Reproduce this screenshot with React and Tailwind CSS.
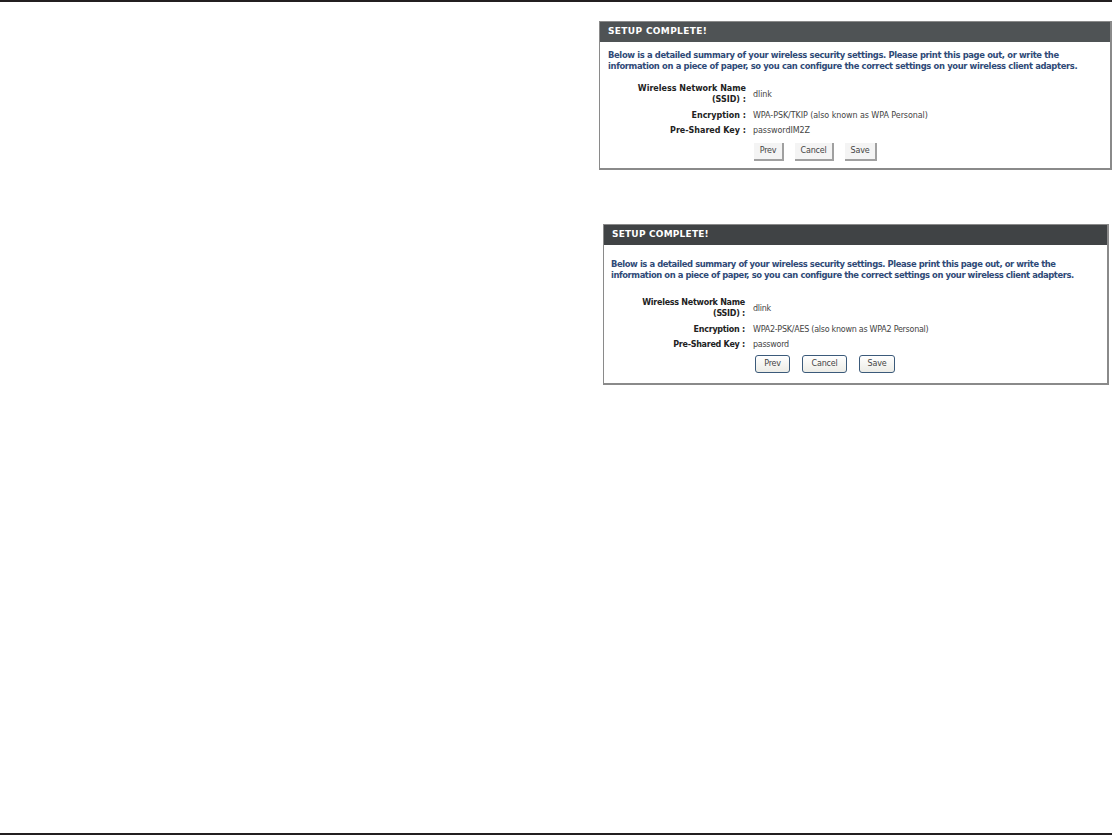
const font = "[font-family:'DejaVu_Sans',Verdana,sans-serif]";

function SetupPanel({ title, variant, encryption, psk }) {
  const isNew = variant === 'new';
  const btn = isNew
    ? 'h-[18px] rounded-[3px] border border-[#3b5a7a] bg-gradient-to-b from-white to-[#ecece6] text-[8px] tracking-[-0.2px] text-[#444] flex items-center justify-center'
    : 'h-[18px] border-r-2 border-b-2 border-[#a0a0a0] bg-[#f4f4f4] text-[8px] tracking-[-0.2px] text-[#444] flex items-center justify-center';
  const label = `${isNew ? '' : 'tracking-[0px]'} text-right font-bold text-[#222]`;
  return (
    <section className={`border border-[#8a8a8a] border-b-2 border-r-2 bg-white ${isNew ? 'w-[506px] h-[161px]' : 'w-[513px] h-[149px]'}`}>
      <h2 className={`${isNew ? 'bg-[#404345] tracking-[0.2px]' : 'bg-[#4f5355] tracking-[0.35px]'} pl-[8px] h-[20px] flex items-center text-[9px] font-bold text-white`}>
        {title}
      </h2>
      <p className={`${isNew ? 'pl-[7px] pt-[14px] tracking-[-0.41px]' : 'pl-[8px] pt-[8px] tracking-[-0.35px]'} text-[8.4px] leading-[11px] font-bold text-[#2f4a77] whitespace-nowrap`}>
        Below is a detailed summary of your wireless security settings. Please print this page out, or write the
        <br />
        information on a piece of paper, so you can configure the correct settings on your wireless client adapters.
      </p>
      <dl className={`${isNew ? 'mt-[16px] grid-cols-[141px_1fr] gap-x-[8px] tracking-[-0.26px]' : 'mt-[11px] grid-cols-[146px_1fr] gap-x-[7px] tracking-[-0.07px]'} grid text-[8px] leading-[11px] text-[#444]`}>
        <dt className={label}>
          Wireless Network Name
          <br />
          (SSID) :
        </dt>
        <dd className="self-center">dlink</dd>
        <dt className={`mt-[5px] ${label}`}>Encryption :</dt>
        <dd className="mt-[5px] whitespace-nowrap">{encryption}</dd>
        <dt className={`mt-[4px] ${label}`}>Pre-Shared Key :</dt>
        <dd className="mt-[4px]">{psk}</dd>
      </dl>
      <div className={`${isNew ? 'ml-[151px] mt-[5px] gap-[12px]' : 'ml-[154px] mt-[7px] gap-[11px]'} flex`}>
        <button className={`${btn} ${isNew ? 'w-[35px]' : 'w-[30px]'}`}>Prev</button>
        <button className={`${btn} ${isNew ? 'w-[45px]' : 'w-[39px]'}`}>Cancel</button>
        <button className={`${btn} ${isNew ? 'w-[36px]' : 'w-[32px]'}`}>Save</button>
      </div>
    </section>
  );
}

export default function App() {
  return (
    <div className={`${font} flex h-[835px] w-[1112px] flex-col justify-between overflow-hidden bg-white`}>
      <div className="h-[2px] bg-[#231f20]" />
      <main className="flex flex-1 flex-col">
        <div className="ml-[599px] mt-[19px]">
          <SetupPanel
            title="SETUP COMPLETE!"
            variant="old"
            encryption="WPA-PSK/TKIP (also known as WPA Personal)"
            psk="passwordIM2Z"
          />
        </div>
        <div className="ml-[603px] mt-[54px]">
          <SetupPanel
            title="SETUP COMPLETE!"
            variant="new"
            encryption="WPA2-PSK/AES (also known as WPA2 Personal)"
            psk="password"
          />
        </div>
      </main>
      <div className="h-[2px] bg-[#231f20]" />
    </div>
  );
}
